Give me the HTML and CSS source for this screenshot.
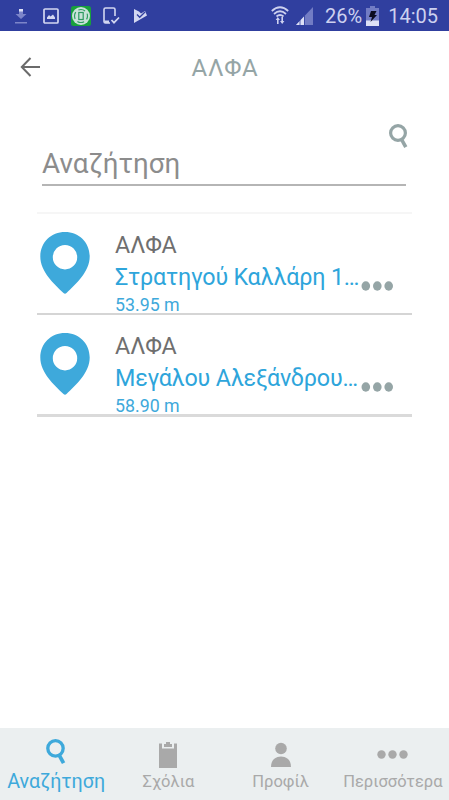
FILE: index.html
```html
<!DOCTYPE html>
<html lang="el">
<head>
  <meta charset="UTF-8">
  <meta name="viewport" content="width=device-width, initial-scale=1.0">
  <title>ΑΛΦΑ</title>
  <link rel="stylesheet" href="styles.css">
</head>
<body>
  <div class="status-bar">
    <div class="status-left">
      <svg class="download" width="14" height="16" viewBox="0 0 14 16"><path d="M5 1h4v5h3.500L7 11 1.500 6H5zM1 14h12v1.600H1z" fill="#7c85c9"/><path d="M5 1h4v2.500H5z" fill="#dde0f5"/></svg>
      <svg class="image" width="16" height="16" viewBox="0 0 16 16"><rect x="1" y="1" width="14" height="14" rx="1" fill="none" stroke="#d3d7f1" stroke-width="1.700"/><path d="M4 11V9.500l2-2.500 1.500 1.500L10 6.500l2 3V11z" fill="#d3d7f1"/></svg>
      <svg class="app" width="20" height="20" viewBox="0 0 20 20"><rect width="20" height="20" rx="2.500" fill="#18a03c"/><circle cx="10" cy="10" r="9" fill="#c9e2d9"/><circle cx="10" cy="10" r="6.500" fill="none" stroke="#2f9f62" stroke-width="1.200" stroke-dasharray="7 3.210" stroke-dashoffset="3.500"/><rect x="7.800" y="6.500" width="4.400" height="7" fill="none" stroke="#2d9a60" stroke-width="1.200"/></svg>
      <svg class="device" width="18" height="18" viewBox="0 0 18 18"><path d="M13 9V2.500Q13 1 11.500 1h-8Q2 1 2 2.500v12Q2 16 3.500 16H8" fill="none" stroke="#d3d7f1" stroke-width="1.600"/><path d="M2 13.500h5V16H3z" fill="#d3d7f1"/><path d="M9.500 13l2.500 2.700 5-5.200" fill="none" stroke="#d3d7f1" stroke-width="1.700"/></svg>
      <svg class="play" width="15" height="16" viewBox="0 0 15 16"><path d="M1 1l5 2.500 2 2L12 3l2 4.500L1 15z" fill="#d3d7f1"/><path d="M4 6.500l2.700 2.800L12 4" fill="none" stroke="#303f9f" stroke-width="1.300"/></svg>
    </div>
    <div class="status-right">
      <svg width="18" height="19" viewBox="0 0 18 19"><g fill="none" stroke="#cdd1ef" stroke-width="1.700"><path d="M.800 5Q9-2.500 17.200 5"/><path d="M3 8q6-5.500 12 0"/><path d="M5.500 10.500q3.500-3 7 0"/></g><path d="M6.800 11l2.200 3H7.600v4H6v-4H4.700zM11.200 18l-2.200-3h1.400v-4H12v4h1.400z" fill="#cdd1ef"/></svg>
      <svg class="signal" width="18" height="18" viewBox="0 0 18 18"><path d="M17 0v18H0z" fill="#727cc4"/><path d="M8 9.500V18H0z" fill="#dde0f5"/><path d="M4 13v5M8.500 9v9" stroke="#303f9f" stroke-width=".8"/></svg>
      <span class="battery-text">26%</span>
      <svg class="battery" width="13" height="20" viewBox="0 0 13 20"><path d="M4 0h5v2h4v18H0V2h4z" fill="#727cc4"/><path d="M0 14.500h13V20H0z" fill="#dde0f5"/><path d="M5 5h5.500L8.500 9H11l-6.500 7 1.500-5H3z" fill="#0b0c20"/></svg>
      <span class="clock">14:05</span>
    </div>
  </div>

  <header class="header">
    <svg class="back" width="22" height="20" viewBox="0 0 22 20"><path d="M10.500 1L1.800 10l8.700 9M2 10h18" fill="none" stroke="#6b6b6b" stroke-width="2"/></svg>
    <h1>ΑΛΦΑ</h1>
  </header>

  <main class="content">
    <div class="search-box">
      <svg class="search-icon" width="19" height="25" viewBox="0 0 19 25"><circle cx="9" cy="9" r="7.400" fill="none" stroke="#95a5a6" stroke-width="3.200"/><path d="M12 14.500l4.800 8.700" stroke="#95a5a6" stroke-width="3.600"/></svg>
      <div class="search-input">Αναζήτηση</div>
    </div>

    <ul class="results">
      <li class="result">
        <svg class="pin" width="50" height="63" viewBox="0 0 50 63"><path fill-rule="evenodd" d="M25 0C11 0 .300 10.500 .300 24.500 .300 39.500 14 52 23.500 61q1.500 1.300 3 0C36 52 49.700 39.500 49.700 24.500 49.700 10.500 39 0 25 0zM25 13a12.200 12.200 0 1 1 0 24.400 12.200 12.200 0 1 1 0-24.400z" fill="#3ea9db"/></svg>
        <div class="info">
          <div class="name">ΑΛΦΑ</div>
          <div class="street">Στρατηγού Καλλάρη 1…</div>
          <div class="distance">53.95 m</div>
        </div>
        <svg class="more" width="32" height="10" viewBox="0 0 32 10"><g fill="#95a5a6"><ellipse cx="4.800" cy="5" rx="4.300" ry="4.700"/><ellipse cx="16.300" cy="5" rx="4.300" ry="4.700"/><ellipse cx="27.700" cy="5" rx="4.300" ry="4.700"/></g></svg>
      </li>
      <li class="result last">
        <svg class="pin" width="50" height="63" viewBox="0 0 50 63"><path fill-rule="evenodd" d="M25 0C11 0 .300 10.500 .300 24.500 .300 39.500 14 52 23.500 61q1.500 1.300 3 0C36 52 49.700 39.500 49.700 24.500 49.700 10.500 39 0 25 0zM25 13a12.200 12.200 0 1 1 0 24.400 12.200 12.200 0 1 1 0-24.400z" fill="#3ea9db"/></svg>
        <div class="info">
          <div class="name">ΑΛΦΑ</div>
          <div class="street">Μεγάλου Αλεξάνδρου…</div>
          <div class="distance">58.90 m</div>
        </div>
        <svg class="more" width="32" height="10" viewBox="0 0 32 10"><g fill="#95a5a6"><ellipse cx="4.800" cy="5" rx="4.300" ry="4.700"/><ellipse cx="16.300" cy="5" rx="4.300" ry="4.700"/><ellipse cx="27.700" cy="5" rx="4.300" ry="4.700"/></g></svg>
      </li>
    </ul>
  </main>

  <nav class="tabs">
    <a class="tab active">
      <svg width="20" height="26" viewBox="0 0 19 25"><circle cx="9" cy="9" r="7.400" fill="none" stroke="#3ea9db" stroke-width="3.200"/><path d="M12 14.500l4.800 8.700" stroke="#3ea9db" stroke-width="3.600"/></svg>
      <span>Αναζήτηση</span>
    </a>
    <a class="tab">
      <svg width="18" height="26" viewBox="0 0 18 26"><path d="M0 1.500h3v5h12v-5h3V26H0z" fill="#a9a9a9"/><path d="M5 5V2h2V0h4v2h2v3z" fill="#a9a9a9"/></svg>
      <span>Σχόλια</span>
    </a>
    <a class="tab">
      <svg width="20" height="26" viewBox="0 0 20 26"><circle cx="10" cy="6.500" r="5.800" fill="#a9a9a9"/><path d="M0 25C0 18.500 4 14.500 10 14.500S20 18.500 20 25z" fill="#a9a9a9"/></svg>
      <span>Προφίλ</span>
    </a>
    <a class="tab">
      <svg class="dots" width="31" height="9" viewBox="0 0 31 9"><g fill="#a9a9a9"><circle cx="4.500" cy="4.500" r="4.200"/><circle cx="15.500" cy="4.500" r="4.200"/><circle cx="26.500" cy="4.500" r="4.200"/></g></svg>
      <span>Περισσότερα</span>
    </a>
  </nav>
</body>
</html>
```
FILE: styles.css
```css
* {
  box-sizing: border-box;
}

body {
  margin: 0;
  height: 100vh;
  display: flex;
  flex-direction: column;
  font-family: Roboto, "Noto Sans", sans-serif;
  background: #fff;
  overflow: hidden;
}

svg {
  display: block;
  flex-shrink: 0;
}

.status-bar {
  height: 31px;
  background: #303f9f;
  display: flex;
  justify-content: space-between;
  align-items: center;
  padding: 0 11px 0 14px;
  color: #cdd1ef;
  font-size: 20px;
}

.status-left,
.status-right {
  display: flex;
  align-items: center;
}

.status-left .image {
  margin-left: 15px;
}

.status-left .app {
  margin-left: 12px;
}

.status-left .device {
  margin-left: 11px;
}

.status-left .play {
  margin-left: 13px;
}

.status-right .signal {
  margin-left: 7px;
}

.battery-text {
  margin-left: 11px;
}

.battery {
  margin-left: 4px;
}

.clock {
  margin-left: 9px;
}

.header {
  height: 71px;
  display: flex;
  align-items: center;
  padding-left: 20px;
}

.header h1 {
  flex: 1;
  margin: 3px 41px 0 0;
  text-align: center;
  font-size: 24px;
  font-weight: 400;
  line-height: 28px;
  letter-spacing: 0.8px;
  color: #95a5a6;
}

.content {
  flex: 1;
  padding: 22px 37px 0;
}

.search-box {
  height: 88px;
  padding: 0 6px 0 5px;
  display: flex;
  flex-direction: column;
}

.search-icon {
  align-self: flex-end;
  margin-right: -2px;
}

.search-input {
  height: 37px;
  line-height: 29px;
  border-bottom: 2px solid #b5b5b5;
  font-size: 27.8px;
  color: #8c8c8c;
}

.results {
  list-style: none;
  margin: 0;
  padding: 0;
  border-top: 2px solid #f6f6f6;
}

.result {
  display: flex;
  height: 101px;
  padding: 18px 17px 0 3px;
  border-bottom: 2px solid #d5d5d5;
}

.result.last {
  height: 102px;
  border-bottom: 3px solid #dadada;
}

.info {
  width: 246px;
  margin-left: 25px;
  white-space: nowrap;
}

.name {
  font-size: 23.3px;
  line-height: 27px;
  color: #6f6f6f;
}

.street {
  font-size: 23.3px;
  letter-spacing: -0.2px;
  line-height: 36px;
  color: #2ea5db;
}

.distance {
  font-size: 17.8px;
  line-height: 19px;
  color: #3ea9db;
}

.more {
  margin-top: 49px;
}

.tabs {
  height: 72px;
  background: #ebeff0;
  display: grid;
  grid-template-columns: repeat(4, 1fr);
}

.tab {
  display: flex;
  flex-direction: column;
  align-items: center;
  padding-top: 14px;
  font-size: 16.5px;
  color: #a9a9a9;
}

.tab span {
  margin-top: 4px;
  line-height: 20px;
}

.tab.active {
  padding-top: 11px;
  font-size: 19.7px;
  color: #3ea9db;
}

.tab.active span {
  margin-top: 7px;
}

.tab .dots {
  margin: 8px 0 9px;
}
```
